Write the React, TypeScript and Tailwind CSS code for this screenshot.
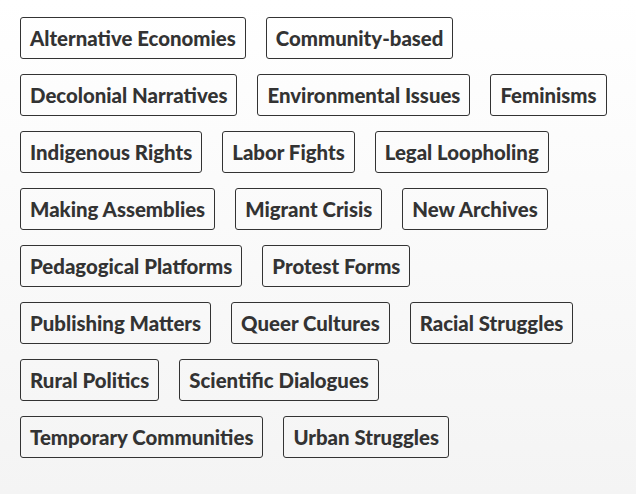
const tags = [
  "Alternative Economies",
  "Community-based",
  "Decolonial Narratives",
  "Environmental Issues",
  "Feminisms",
  "Indigenous Rights",
  "Labor Fights",
  "Legal Loopholing",
  "Making Assemblies",
  "Migrant Crisis",
  "New Archives",
  "Pedagogical Platforms",
  "Protest Forms",
  "Publishing Matters",
  "Queer Cultures",
  "Racial Struggles",
  "Rural Politics",
  "Scientific Dialogues",
  "Temporary Communities",
  "Urban Struggles",
];

export default function App() {
  return (
    <div className="min-h-[494px] w-full bg-gradient-to-b from-white to-[#f4f4f4] pl-5 pt-[17px]">
      <ul className="flex flex-wrap">
        {tags.map((t) => (
          <li
            key={t}
            className="mb-[15px] mr-5 rounded-[3px] border border-[#333] px-[9px] py-2 text-[20.4px] leading-[24px] font-black text-[#333] [font-family:Lato,sans-serif]"
          >
            {t}
          </li>
        ))}
      </ul>
    </div>
  );
}
